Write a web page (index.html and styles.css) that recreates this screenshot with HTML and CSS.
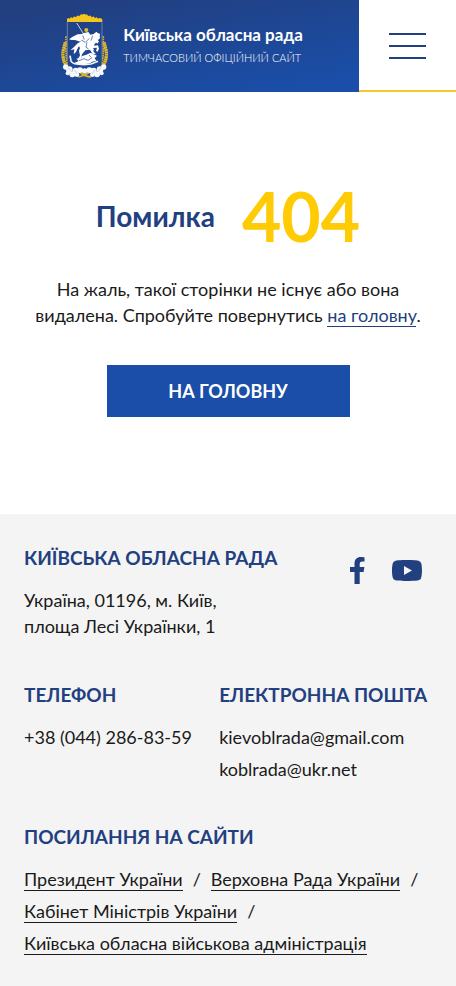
FILE: index.html
```html
<!DOCTYPE html>
<html lang="uk">
<head>
  <meta charset="UTF-8">
  <meta name="viewport" content="width=device-width, initial-scale=1.0">
  <title>Помилка 404 - Київська обласна рада</title>
  <link rel="stylesheet" href="styles.css">
</head>
<body>
  <header class="header">
    <a class="logo" href="#">
      <svg class="logo-crest" viewBox="33 27 150 195" aria-hidden="true">
        <!-- crown -->
        <path fill="#f4c51c" d="M54 51v-8q4-7 8-1 3-9 9-2 3-9 10-3 4-9 10-3 4-9 9-5 5-5 9 0 5-4 9 5 6-6 10 3 7-6 10 3 6-7 9 2 4-6 13 1v8z"/>
        <path fill="none" stroke="#8f9fbf" stroke-width="2" d="M55 52v112M159 52v112"/>
        <!-- wheat -->
        <path fill="none" stroke="#e5bd2b" stroke-width="10" stroke-dasharray="6 1" d="M49 112c-2 12-9 24-7 40 1 14 5 24 12 32M165 112c2 12 9 24 7 40-1 14-5 24-12 32"/>
        <path fill="none" stroke="#d3ae31" stroke-width="5" stroke-dasharray="5 2" d="M51 94c0 26-2 50 4 84M163 94c0 26 2 50-4 84"/>
        <!-- rider -->
        <path fill="none" stroke="#cbd3dc" stroke-width="3" d="M83 54l52 82"/>
        <circle cx="112" cy="75" r="6" fill="#e5bd2b"/>
        <path fill="#fff" d="M105 84l13-3 6 8 10-2 8-7 5 5 6 1-1 15-7 3 5 5-5 7-6-6-4 12 12-1 3 10-4 9-5-2 3-10-12 1 2 11 7 8-10-1-8-13-14 2-10 12-3 12-10 2 7-10-3-15 6-16-8 5-7 15-7 7 2-15-12 3 11-10 11-11 8-4 6-9-13-2-14 5-13-2 11-8 15-7 13-1z"/>
        <path fill="#fff" d="M63 104q14-16 34-14l7 10-10 10-16-5zM92 112l26-2 10 12-8 13-24-1-6-10zM129 94l15-9 8 13-12 17-13 3z"/>
        <path fill="none" stroke="#214892" stroke-width="2" d="M97 105l12 7 12-12M114 112l-3 15 8 5M131 92l-5 15M101 91l5 13"/>
        <!-- dragon -->
        <path fill="#fff" d="M76 174l13-6-7-7 15-2 0-5 15-5 13-6 8 5 11 4-7 8 5 7-12 3-7 5-14 2-8 3-13-1z"/>
        <path fill="none" stroke="#f4f6f8" stroke-width="5" d="M64 165q6 12 19 12l21 2 22-2 21-8M66 167l-3-15"/>
        <path fill="none" stroke="#214892" stroke-width="2" d="M90 167l15-6 12 5 12-8M120 150l6 7"/>
        <!-- leaves -->
        <g fill="#f7f9fb">
          <circle cx="50" cy="186" r="8"/>
          <circle cx="61" cy="194" r="10"/>
          <circle cx="56" cy="205" r="6"/>
          <circle cx="70" cy="208" r="9"/>
          <circle cx="80" cy="197" r="9"/>
          <circle cx="93" cy="196" r="9"/>
          <circle cx="84" cy="209" r="7"/>
          <circle cx="164" cy="186" r="8"/>
          <circle cx="153" cy="194" r="10"/>
          <circle cx="158" cy="205" r="6"/>
          <circle cx="144" cy="208" r="9"/>
          <circle cx="134" cy="197" r="9"/>
          <circle cx="121" cy="196" r="9"/>
          <circle cx="130" cy="209" r="7"/>
          <circle cx="107" cy="198" r="8"/>
        </g>
        <path fill="none" stroke="#a9b9d4" stroke-width="2" d="M56 187l13 14M76 194l8 12M158 187l-13 14M138 194l-8 12"/>
        <path fill="none" stroke="#dcb32b" stroke-width="5" d="M88 216q14-2 31-12M95 204q12 10 31 12"/>
      </svg>
      <span class="logo-text">
        <span class="logo-title">Київська обласна рада</span>
        <span class="logo-subtitle">Тимчасовий офіційний сайт</span>
      </span>
    </a>
    <button class="menu-btn" type="button" aria-label="Меню">
      <span></span>
      <span></span>
      <span></span>
    </button>
  </header>

  <main class="error">
    <h1 class="error-title">Помилка <span class="error-code">404</span></h1>
    <p class="error-text">На жаль, такої сторінки не існує або вона видалена. Спробуйте повернутись <a href="#">на головну</a>.</p>
    <a class="btn" href="#">На головну</a>
  </main>

  <footer class="footer">
    <div class="footer-top">
      <div>
        <h2>Київська обласна рада</h2>
        <address>Україна, 01196, м. Київ,<br>площа Лесі Українки, 1</address>
      </div>
      <div class="socials">
        <a href="#" aria-label="Facebook">
          <svg width="16" height="27" viewBox="0 0 16 27"><path fill="#223f80" d="M4.500 27V15H0v-5h4.500V6.500C4.500 2.300 7 0 10.800 0c1.800 0 3.700.3 3.700.3v4.300h-2.100c-2 0-2.700 1.200-2.700 2.500V10h4.700l-.8 5H9.700v12z"/></svg>
        </a>
        <a href="#" aria-label="YouTube">
          <svg width="30" height="21" viewBox="0 0 30 21"><path fill="#223f80" d="M29.200 3.300A3.700 3.700 0 0 0 26.500.7C24.200 0 15 0 15 0S5.800 0 3.500.7A3.700 3.700 0 0 0 .8 3.300C0 6 0 10.500 0 10.500s0 4.500.8 7.200a3.700 3.700 0 0 0 2.700 2.600C5.800 21 15 21 15 21s9.200 0 11.500-.7a3.700 3.700 0 0 0 2.700-2.600c.8-2.700.8-7.200.8-7.200s0-4.500-.8-7.200z"/><path fill="#f4f4f4" d="M12 6v9l8-4.500z"/></svg>
        </a>
      </div>
    </div>

    <div class="contacts">
      <div>
        <h2>Телефон</h2>
        <a href="tel:+380442868359">+38 (044) 286-83-59</a>
      </div>
      <div>
        <h2>Електронна пошта</h2>
        <a href="mailto:kievoblrada@gmail.com">kievoblrada@gmail.com</a>
        <a href="mailto:koblrada@ukr.net">koblrada@ukr.net</a>
      </div>
    </div>

    <div class="links">
      <h2>Посилання на сайти</h2>
      <ul>
        <li><a href="#">Президент України</a></li>
        <li><a href="#">Верховна Рада України</a></li>
        <li><a href="#">Кабінет Міністрів України</a></li>
        <li><a href="#">Київська обласна військова адміністрація</a></li>
      </ul>
    </div>
  </footer>
</body>
</html>
```
FILE: styles.css
```css
* {
  box-sizing: border-box;
  margin: 0;
  padding: 0;
}

body {
  display: flex;
  flex-direction: column;
  min-height: 100vh;
  font-family: Lato, "Noto Sans", sans-serif;
  font-size: 18px;
  line-height: 26px;
  color: #1a1a1a;
  background: #fff;
}

a {
  color: inherit;
  text-decoration: none;
}

/* header */
.header {
  display: flex;
  height: 92px;
}

.logo {
  flex: 1;
  display: flex;
  align-items: center;
  justify-content: center;
  gap: 13px;
  padding-left: 4px;
  color: #fff;
  background: linear-gradient(170deg, #223f80 10%, #1a4ea8 90%);
}

.logo-crest {
  width: 50px;
  height: 65px;
}

.logo-text {
  display: flex;
  flex-direction: column;
}

.logo-title {
  font-size: 17px;
  font-weight: 700;
  line-height: 24px;
}

.logo-subtitle {
  font-size: 11px;
  font-weight: 300;
  line-height: 22px;
  text-transform: uppercase;
}

.menu-btn {
  display: flex;
  flex-direction: column;
  align-items: center;
  justify-content: center;
  gap: 10px;
  width: 97px;
  padding-top: 2px;
  border: 0;
  border-bottom: 2px solid #f4c82e;
  background: #fff;
  cursor: pointer;
}

.menu-btn span {
  width: 37px;
  height: 2px;
  background: #223f80;
}

/* 404 */
.error {
  flex: 1;
  display: flex;
  flex-direction: column;
  align-items: center;
  padding: 80px 24px 97px;
}

.error-title {
  display: flex;
  align-items: center;
  gap: 27px;
  font-size: 28px;
  line-height: 88px;
  color: #223f80;
}

.error-code {
  font-size: 68px;
  color: #ffcb05;
}

.error-text {
  margin-top: 16px;
  text-align: center;
}

.error-text a {
  color: #223f80;
  border-bottom: 1px solid #223f80;
}

.btn {
  width: 243px;
  margin-top: 37px;
  font-size: 18px;
  font-weight: 700;
  line-height: 52px;
  text-align: center;
  text-transform: uppercase;
  color: #fff;
  background: #1a4ea8;
}

/* footer */
.footer {
  padding: 31px 24px 30px;
  background: #f4f4f4;
}

.footer h2 {
  margin-bottom: 16px;
  font-size: 19px;
  line-height: 26px;
  text-transform: uppercase;
  color: #223f80;
}

.footer address {
  font-style: normal;
}

.footer-top {
  display: flex;
  justify-content: space-between;
}

.socials {
  display: flex;
  align-items: center;
  gap: 26px;
  height: 50px;
  padding-right: 10px;
}

.socials svg {
  display: block;
}

.contacts {
  display: grid;
  grid-template-columns: 11fr 12fr;
  margin-top: 43px;
}

.contacts a {
  display: block;
  margin-bottom: 6px;
}

.links {
  margin-top: 36px;
}

.links ul {
  display: flex;
  flex-wrap: wrap;
  gap: 6px 10px;
  list-style: none;
}

.links a {
  border-bottom: 1px solid #1a1a1a;
}

.links li:not(:last-child)::after {
  content: "/";
  margin-left: 10px;
}
```
